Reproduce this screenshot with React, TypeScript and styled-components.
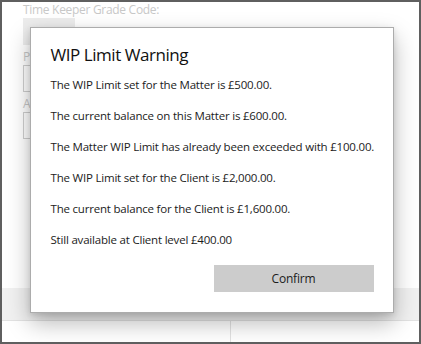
import React from "react";
import styled, { createGlobalStyle } from "styled-components";

const GlobalStyle = createGlobalStyle`
  html, body {
    margin: 0;
    padding: 0;
    background: #ffffff;
  }
  * {
    box-sizing: border-box;
  }
`;

const Frame = styled.div`
  position: relative;
  width: 421px;
  height: 344px;
  border: 2px solid #5f5f5f;
  background: #ffffff;
  overflow: hidden;
  font-family: "Open Sans", "Noto Sans", sans-serif;
`;

const Form = styled.div`
  display: flex;
  flex-direction: column;
  height: 100%;
`;

const Fields = styled.div`
  flex: 1;
  display: flex;
  flex-direction: column;
  padding: 0 0 0 21px;
`;

const FieldLabel = styled.div`
  font-size: 12px;
  letter-spacing: -0.3px;
  line-height: 16px;
  color: #c8c8c8;
`;

const FieldInput = styled.div<{ $filled?: boolean; $width: number }>`
  width: ${(p) => p.$width}px;
  height: 27px;
  margin: 0 0 4px;
  background: ${(p) => (p.$filled ? "#ececec" : "#ffffff")};
  border: 1px solid ${(p) => (p.$filled ? "#ececec" : "#cfcfcf")};
`;

const Band = styled.div`
  height: 32px;
  background: #f1f1f1;
`;

const BottomRow = styled.div`
  display: grid;
  grid-template-columns: 229px 1fr;
  height: 22px;
  border-top: 1px solid #e2e2e2;
`;

const Cell = styled.div<{ $divider?: boolean }>`
  border-right: ${(p) => (p.$divider ? "1px solid #e2e2e2" : "none")};
`;

const Overlay = styled.div`
  position: absolute;
  inset: 0;
  display: flex;
  justify-content: center;
  align-items: flex-start;
  padding: 25px 0 0 2px;
`;

const Dialog = styled.div`
  width: 364px;
  height: 286px;
  display: flex;
  flex-direction: column;
  padding: 14px 19px 20px 20px;
  background: #ffffff;
  border: 1px solid #acacac;
  box-shadow: 0 10px 22px rgba(0, 0, 0, 0.28), 0 2px 6px rgba(0, 0, 0, 0.12);
  color: #1b1b1b;
`;

const Title = styled.h1`
  margin: 0 0 8px;
  font-size: 17px;
  font-weight: 400;
  letter-spacing: -0.45px;
  line-height: 26px;
  color: #111111;
`;

const Message = styled.p`
  margin: 0 0 14px;
  font-size: 11.5px;
  letter-spacing: -0.2px;
  line-height: 17px;
  white-space: nowrap;
`;

const Footer = styled.div`
  margin-top: auto;
  display: flex;
  justify-content: flex-end;
`;

const ConfirmButton = styled.button`
  width: 160px;
  height: 27px;
  border: none;
  background: #cccccc;
  color: #1b1b1b;
  font-family: inherit;
  font-size: 12px;
  letter-spacing: -0.2px;
  cursor: pointer;
`;

const messages = [
  "The WIP Limit set for the Matter is £500.00.",
  "The current balance on this Matter is £600.00.",
  "The Matter WIP Limit has already been exceeded with £100.00.",
  "The WIP Limit set for the Client is £2,000.00.",
  "The current balance for the Client is £1,600.00.",
  "Still available at Client level £400.00",
];

export default function App() {
  return (
    <>
      <GlobalStyle />
      <Frame>
        <Form>
          <Fields>
            <FieldLabel>Time Keeper Grade Code:</FieldLabel>
            <FieldInput $filled $width={52} />
            <FieldLabel>P</FieldLabel>
            <FieldInput $width={120} />
            <FieldLabel>A</FieldLabel>
            <FieldInput $width={120} />
          </Fields>
          <Band />
          <BottomRow>
            <Cell $divider />
            <Cell />
          </BottomRow>
        </Form>
        <Overlay>
          <Dialog>
            <Title>WIP Limit Warning</Title>
            {messages.map((m) => (
              <Message key={m}>{m}</Message>
            ))}
            <Footer>
              <ConfirmButton>Confirm</ConfirmButton>
            </Footer>
          </Dialog>
        </Overlay>
      </Frame>
    </>
  );
}
